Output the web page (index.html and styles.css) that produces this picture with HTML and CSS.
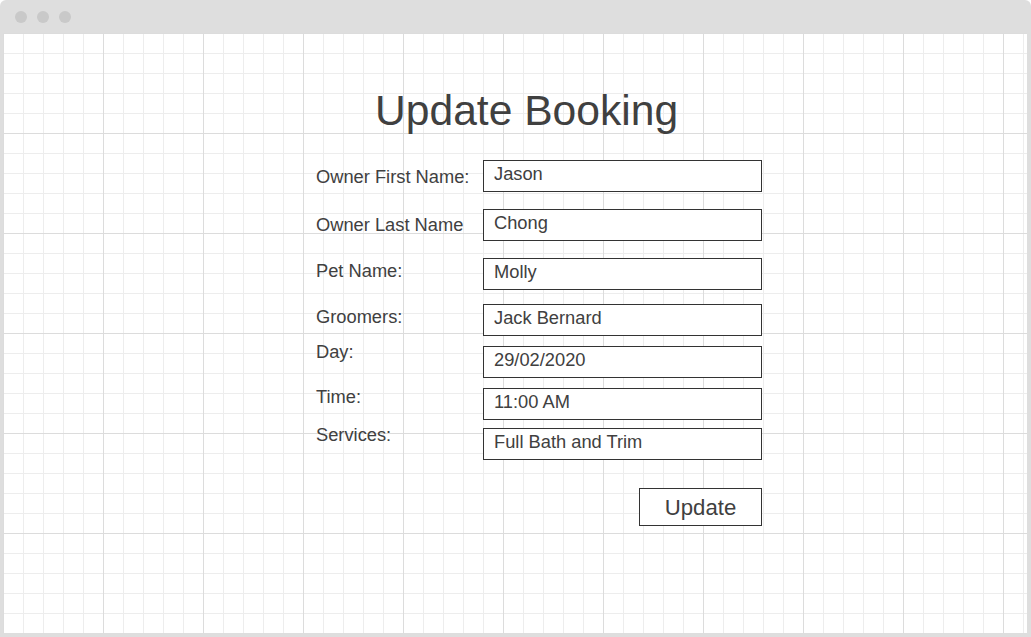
FILE: index.html
```html
<!DOCTYPE html>
<html>
<head lang="en">
    <meta charset="UTF-8">
    <title>Update Booking</title>
    <link rel="stylesheet" href="styles.css">
</head>
<body>
    <div class="window">
        <div class="titlebar">
            <span class="dot"></span>
            <span class="dot"></span>
            <span class="dot"></span>
        </div>
        <div class="canvas">
            <form class="booking">
                <h1 class="title">Update Booking</h1>
                <div class="row">
                    <label class="label nudge-8">Owner First Name:</label>
                    <input class="field" type="text" value="Jason">
                </div>
                <div class="row gap-17">
                    <label class="label nudge-7">Owner Last Name</label>
                    <input class="field" type="text" value="Chong">
                </div>
                <div class="row gap-17">
                    <label class="label nudge-4">Pet Name:</label>
                    <input class="field" type="text" value="Molly">
                </div>
                <div class="row gap-14">
                    <label class="label nudge-4">Groomers:</label>
                    <input class="field" type="text" value="Jack Bernard">
                </div>
                <div class="row gap-10">
                    <label class="label lift-3">Day:</label>
                    <input class="field" type="text" value="29/02/2020">
                </div>
                <div class="row gap-10">
                    <label class="label">Time:</label>
                    <input class="field" type="text" value="11:00 AM">
                </div>
                <div class="row gap-8">
                    <label class="label lift-2">Services:</label>
                    <input class="field" type="text" value="Full Bath and Trim">
                </div>
                <div class="actions">
                    <button class="update" type="button">Update</button>
                </div>
            </form>
        </div>
    </div>
</body>
</html>
```

FILE: styles.css
```css
body{
    margin: 0;
    font-family: "Liberation Sans", Arial, sans-serif;
    color: #404040;
}
.window{
    width: 1031px;
    height: 637px;
    background: #dedede;
    border-radius: 6px 6px 0 0;
    display: flex;
    flex-direction: column;
}
.titlebar{
    height: 33px;
    display: flex;
    align-items: center;
    gap: 10px;
    padding-left: 15px;
}
.dot{
    width: 12px;
    height: 12px;
    border-radius: 50%;
    background: #c9c9c9;
}
.canvas{
    height: 600px;
    margin: 0 4px 4px 3px;
    padding-top: 53px;
    box-sizing: border-box;
    background-color: #fff;
    background-image:
        linear-gradient(#dcdcdc 1px, transparent 1px),
        linear-gradient(90deg, #dcdcdc 1px, transparent 1px),
        linear-gradient(#ededed 1px, transparent 1px),
        linear-gradient(90deg, #ededed 1px, transparent 1px);
    background-size: 100px 100px, 100px 100px, 20px 20px, 20px 20px;
}
.booking{
    width: 446px;
    margin: 0 0 0 313px;
}
.title{
    margin: 0 0 26px 59px;
    font-size: 42.6px;
    line-height: 48px;
    font-weight: normal;
}
.row{
    display: flex;
    align-items: flex-start;
}
.gap-17{ margin-top: 17px; }
.gap-14{ margin-top: 14px; }
.gap-10{ margin-top: 10px; }
.gap-8{ margin-top: 8px; }
.label{
    width: 167px;
    font-size: 18.3px;
    line-height: 18px;
}
.nudge-8{ margin-top: 8px; }
.nudge-7{ margin-top: 7px; }
.nudge-4{ margin-top: 4px; }
.lift-3{ margin-top: -3px; }
.lift-2{ margin-top: -2px; }
.field{
    width: 279px;
    height: 32px;
    box-sizing: border-box;
    margin: 0;
    padding: 0 10px 5px 10px;
    border: 1px solid #333;
    border-radius: 0;
    background: #fff;
    font-family: "Liberation Sans", Arial, sans-serif;
    font-size: 18.3px;
    color: #404040;
    outline: none;
}
.actions{
    display: flex;
    justify-content: flex-end;
    margin-top: 28px;
}
.update{
    width: 123px;
    height: 38px;
    margin: 0;
    padding: 2px 0 0 0;
    border: 1px solid #333;
    border-radius: 0;
    background: #fff;
    font-family: "Liberation Sans", Arial, sans-serif;
    font-size: 22.2px;
    color: #404040;
}
```
